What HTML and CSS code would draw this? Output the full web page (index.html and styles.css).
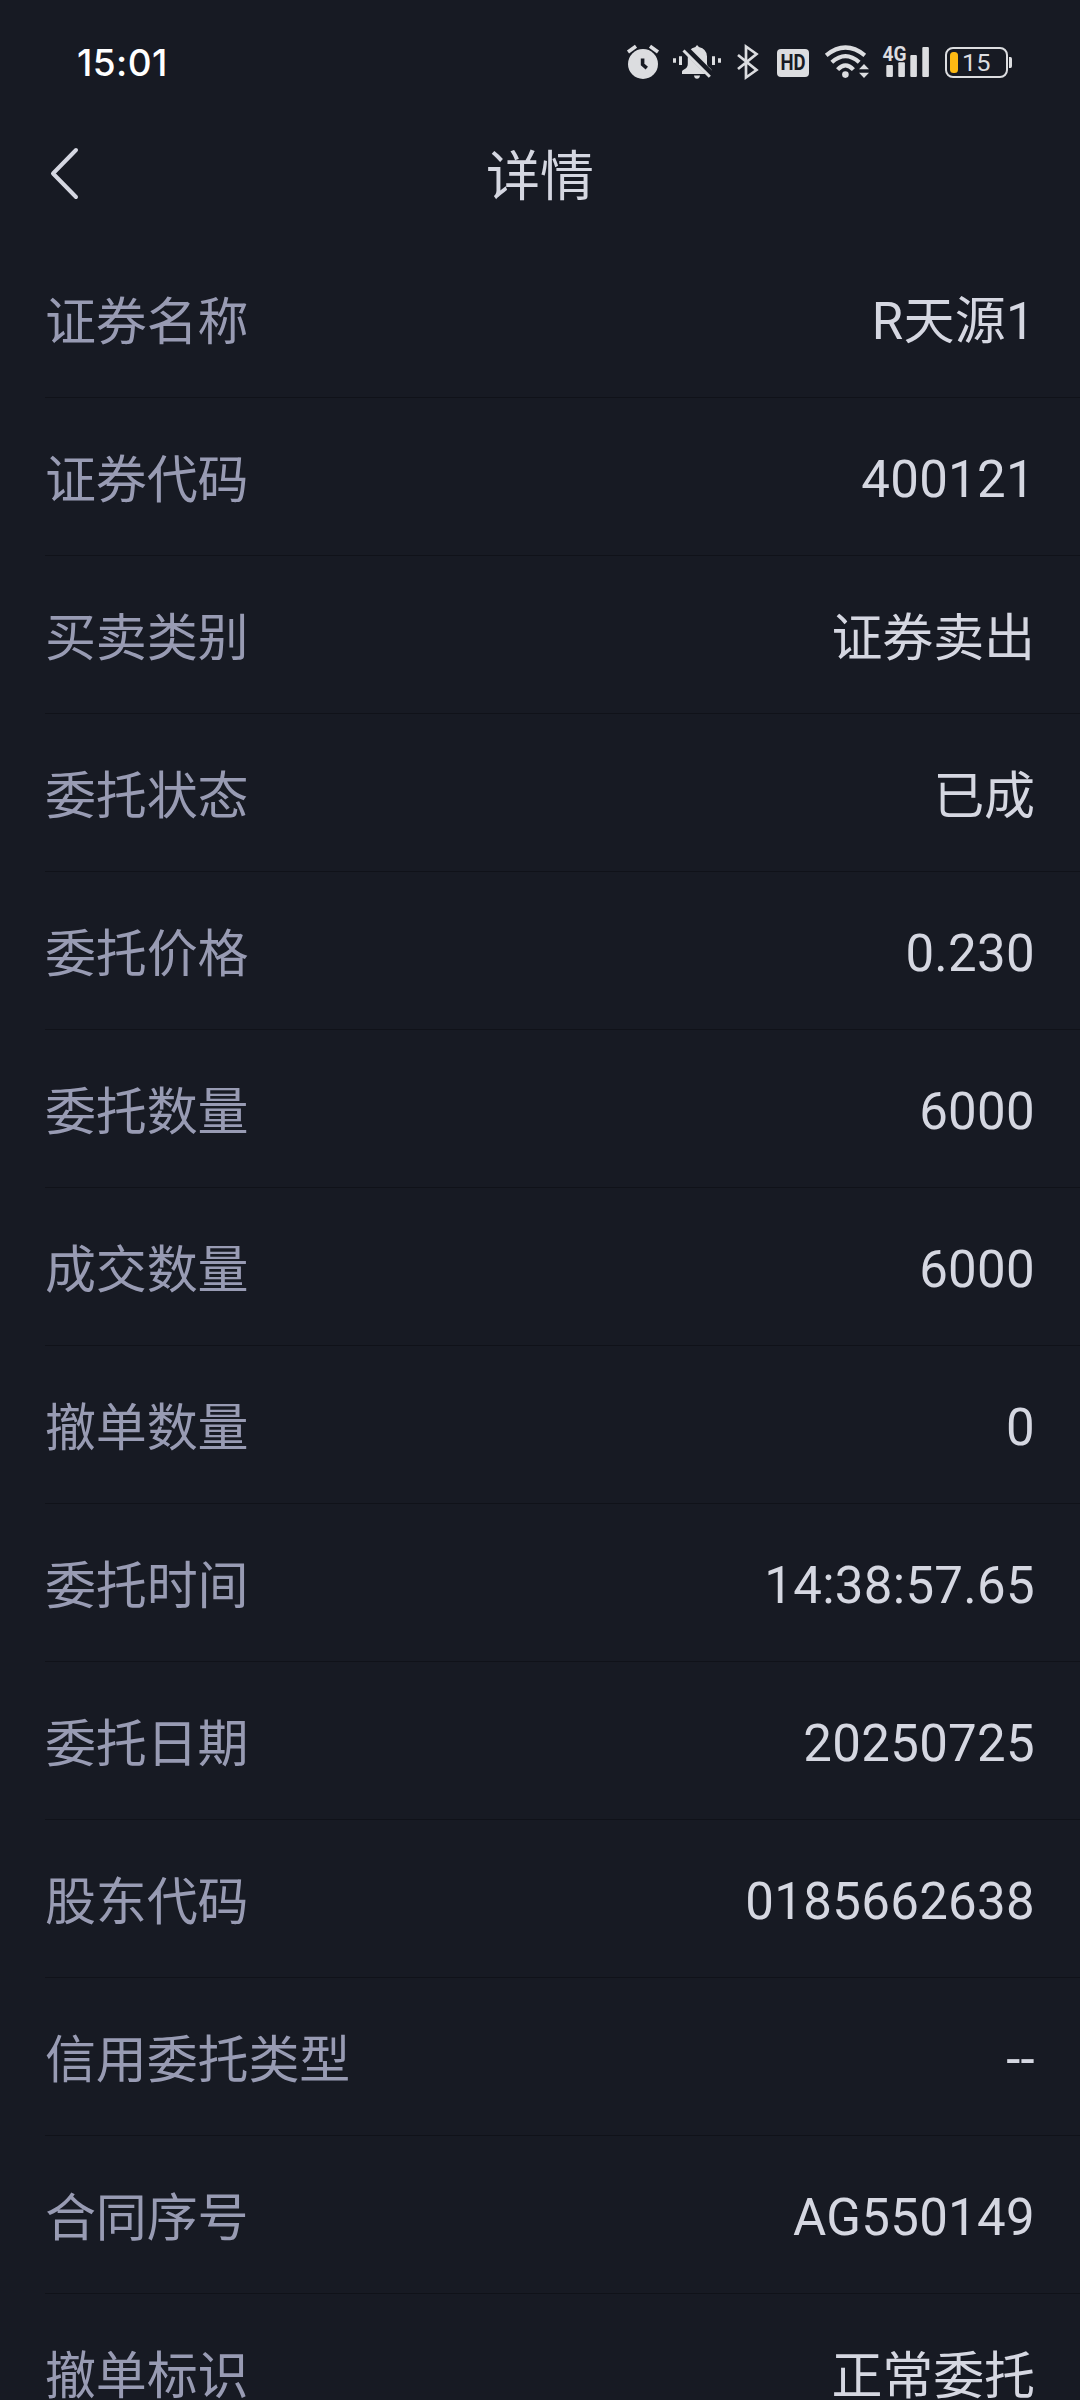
FILE: index.html
```html
<!DOCTYPE html>
<html lang="zh-CN">
<head>
    <meta charset="UTF-8">
    <meta name="viewport" content="width=device-width, initial-scale=1.0">
    <title>详情</title>
    <link rel="stylesheet" href="styles.css">
</head>
<body>
    <!-- Status bar -->
    <div class="status-bar">
        <span class="time">15:01</span>
        <div class="status-icons">
            <svg class="alarm" width="36" height="40" viewBox="0 0 36 40">
                <circle cx="17" cy="22" r="15" fill="#dcdde0"/>
                <path d="M2 10L10 4.2M24 4.2L32 10" stroke="#dcdde0" stroke-width="3.6"/>
                <path d="M16.6 16.4V22.5L20.8 26.2" fill="none" stroke="#171a23" stroke-width="3.6"/>
            </svg>
            <svg class="bell" width="50" height="40" viewBox="0 0 50 40">
                <path d="M1 16.3h3v4.5H1zM7 14.2h3V23H7zM40 14.2h3V23h-3zM46 16.3h3v4.5h-3z" fill="#dcdde0"/>
                <path d="M10 32V29.5Q10 28.5 12 27.6Q15.8 25.5 15.8 22V14.5Q15.8 7 23.5 5Q25 1.5 26.8 5Q35 7 35 14.5V22Q35 24.5 38 26Q40 27.5 40 29.5V32ZM22 33.5H28Q27.5 36.7 25 36.7Q22.5 36.7 22 33.5Z" fill="#dcdde0"/>
                <path d="M12.5 6L40.5 34" stroke="#171a23" stroke-width="7"/>
                <path d="M11.5 8.5L37.8 34.8" stroke="#dcdde0" stroke-width="3"/>
            </svg>
            <svg class="bluetooth" width="24" height="40" viewBox="0 0 24 40">
                <path d="M3 13L21.5 28L11 35.5V4.5L21.5 12L3 27" fill="none" stroke="#dcdde0" stroke-width="2.7"/>
            </svg>
            <div class="hd"><span>HD</span></div>
            <svg class="wifi" width="46" height="40" viewBox="0 0 46 40">
                <path d="M2.2 13.3Q21.5 -2.3 40.8 13.3M7.8 20.3Q21.5 8 35.2 20.3M13.6 27.6Q21.5 19.2 29.4 27.6" fill="none" stroke="#dcdde0" stroke-width="4.2"/>
                <circle cx="21.4" cy="32.6" r="3.3" fill="#dcdde0"/>
                <path d="M40 22L45 27.3H35ZM35 30.7H45L40 36Z" fill="#dcdde0"/>
            </svg>
            <svg class="signal" width="48" height="40" viewBox="0 0 48 40">
                <text x="0.5" y="18.6" textLength="24" lengthAdjust="spacingAndGlyphs" font-size="21" font-weight="700" fill="#dcdde0">4G</text>
                <g fill="#dcdde0">
                    <rect x="4.3" y="23" width="6.6" height="12" rx="1"/>
                    <rect x="16.3" y="20.3" width="6.6" height="14.7" rx="1"/>
                    <rect x="28.3" y="13" width="6.6" height="22" rx="1"/>
                    <rect x="40.3" y="5" width="6.6" height="30" rx="1"/>
                </g>
            </svg>
            <svg class="battery" width="70" height="40" viewBox="0 0 70 40">
                <rect x="2" y="6" width="61" height="29" rx="7" fill="none" stroke="#dcdde0" stroke-width="2"/>
                <rect x="6" y="10" width="8" height="21" rx="3.5" fill="#fdb913"/>
                <path d="M65 15H66.5Q68 15 68 17V24Q68 26 66.5 26H65Z" fill="#dcdde0"/>
                <text x="18" y="29.3" textLength="28.5" lengthAdjust="spacingAndGlyphs" font-size="24.5" fill="#dcdde0">15</text>
            </svg>
        </div>
    </div>

    <!-- Title -->
    <div class="header">
        <svg class="back" width="32" height="54" viewBox="0 0 32 54">
            <path d="M26 3L3 26.5L26 50" fill="none" stroke="#d5d7e1" stroke-width="4" stroke-linecap="round" stroke-linejoin="round"/>
        </svg>
        <h1>详情</h1>
    </div>

    <!-- Order details -->
    <div class="list">
        <div class="row"><span class="label">证券名称</span><span class="value">R天源1</span></div>
        <div class="row"><span class="label">证券代码</span><span class="value">400121</span></div>
        <div class="row"><span class="label">买卖类别</span><span class="value cn">证券卖出</span></div>
        <div class="row"><span class="label">委托状态</span><span class="value cn">已成</span></div>
        <div class="row"><span class="label">委托价格</span><span class="value">0.230</span></div>
        <div class="row"><span class="label">委托数量</span><span class="value">6000</span></div>
        <div class="row"><span class="label">成交数量</span><span class="value">6000</span></div>
        <div class="row"><span class="label">撤单数量</span><span class="value">0</span></div>
        <div class="row"><span class="label">委托时间</span><span class="value">14:38:57.65</span></div>
        <div class="row"><span class="label">委托日期</span><span class="value">20250725</span></div>
        <div class="row"><span class="label">股东代码</span><span class="value">0185662638</span></div>
        <div class="row"><span class="label">信用委托类型</span><span class="value">--</span></div>
        <div class="row"><span class="label">合同序号</span><span class="value">AG550149</span></div>
        <div class="row"><span class="label">撤单标识</span><span class="value cn">正常委托</span></div>
    </div>
</body>
</html>
```
FILE: styles.css
```css
* {
    box-sizing: border-box;
}
body {
    margin: 0;
    height: 2400px;
    overflow: hidden;
    background-color: #171a23;
    font-family: Roboto, "Noto Sans CJK SC", sans-serif;
}
svg {
    overflow: visible;
}

/* Status bar */
.status-bar {
    display: flex;
    justify-content: space-between;
    height: 124px;
    padding: 42px 66px 0 77px;
}
.time {
    height: 40px;
    line-height: 41px;
    font-family: Inter, sans-serif;
    font-size: 37px;
    font-weight: 500;
    letter-spacing: 0.4px;
    color: #fff;
}
.status-icons {
    display: flex;
    font-family: Roboto, sans-serif;
}
.bell {
    margin-left: 10px;
}
.bluetooth {
    margin-left: 13px;
}
.hd {
    display: flex;
    justify-content: center;
    width: 32px;
    height: 28px;
    margin: 7px 0 0 18px;
    border-radius: 4px;
    background-color: #dcdde0;
    color: #171a23;
    font-size: 22px;
    font-weight: 700;
    line-height: 28px;
}
.hd span {
    transform: scaleX(0.84);
}
.wifi {
    margin-left: 15px;
}
.signal {
    margin-left: 12px;
}
.battery {
    margin-left: 14px;
}

/* Title bar */
.header {
    display: grid;
    grid-template-columns: 90px 1fr 90px;
    align-items: center;
    height: 116px;
    padding-bottom: 17px;
}
.back {
    margin-left: 50px;
}
.header h1 {
    margin: 0;
    padding-top: 8px;
    text-align: center;
    font-size: 54px;
    font-weight: 400;
    line-height: 80px;
    color: #d5d7e1;
}

/* Detail rows */
.row {
    display: flex;
    justify-content: space-between;
    align-items: center;
    height: 158px;
    margin-left: 45px;
    padding: 7px 45px 0 0;
    border-bottom: 1px solid #101219;
    font-size: 51px;
    line-height: 76px;
}
.label {
    padding-top: 2px;
    letter-spacing: -0.15px;
    color: #989bb3;
}
.value {
    letter-spacing: 0.3px;
    color: #d5d7e1;
}
.cn {
    padding-top: 2px;
    letter-spacing: -0.1px;
}
```
